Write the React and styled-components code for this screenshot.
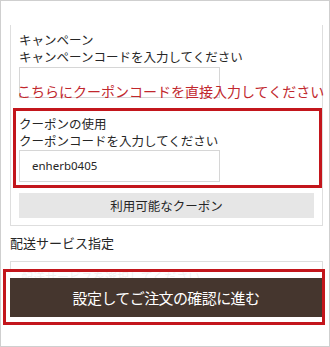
import React from "react";
import styled, { createGlobalStyle } from "styled-components";

const Global = createGlobalStyle`
  html, body { margin: 0; padding: 0; background: #fff; }
  body { font-family: "Noto Sans", "Noto Sans CJK JP", sans-serif; color: #333; }
  * { box-sizing: border-box; }
`;

const Frame = styled.div`
  position: relative;
  width: 330px;
  height: 347px;
  border: 1px solid #cfcfcf;
  padding-top: 24px;
  overflow: hidden;
  background: #fff;
`;

const Card = styled.div`
  width: 313px;
  margin-left: 9px;
  border: 1px solid #dedede;
  border-top: none;
  padding: 6px 8px 7px 8px;
`;

const Label = styled.div`
  font-size: 12.5px;
  line-height: 17px;
  color: #262626;
  font-family: "Noto Sans CJK JP", sans-serif;
  white-space: nowrap;
`;

const Input = styled.div`
  width: 201px;
  height: ${(p) => p.$h || 31}px;
  margin-top: ${(p) => p.$mt || 2}px;
  border: 1px solid #d6d6d6;
  background: #fff;
  display: flex;
  align-items: center;
  padding-left: 12px;
  font-size: 11.5px;
  color: #262626;
  font-family: "Noto Sans", sans-serif;
`;

const Note = styled.div`
  position: absolute;
  left: 16px;
  top: 81px;
  font-size: 14px;
  line-height: 18px;
  color: #c1272d;
  font-family: "Noto Sans CJK JP", sans-serif;
  white-space: nowrap;
`;

const Highlight = styled.div`
  margin: ${(p) => p.$mt || 0}px -8px 0 -6px;
  border: 3px solid #c3161c;
  padding: 3.5px 3px 3px 3px;
`;

const GrayButton = styled.div`
  margin-top: 5px;
  height: 25px;
  background: #e6e6e6;
  display: flex;
  align-items: center;
  justify-content: center;
  font-size: 12.5px;
  color: #262626;
  font-family: "Noto Sans CJK JP", sans-serif;
`;

const SectionTitle = styled.div`
  margin: 8px 0 0 9px;
  font-size: 13px;
  line-height: 18px;
  color: #262626;
  font-family: "Noto Sans CJK JP", sans-serif;
`;

const Select = styled.div`
  width: 313px;
  height: 31px;
  margin: 9px 0 0 9px;
  border: 1px solid #dedede;
  display: flex;
  align-items: center;
  padding-left: 10px;
  font-size: 12px;
  color: #999;
  font-family: "Noto Sans CJK JP", sans-serif;
`;

const Footer = styled.div`
  position: absolute;
  left: 2px;
  top: 268px;
  width: 322px;
  height: 56px;
  border: 3px solid #c3161c;
  background: rgba(255, 255, 255, 0.86);
  padding: 6px 0 5px 4px;
`;

const MainButton = styled.div`
  height: 39px;
  background: #45362e;
  color: #fff;
  display: flex;
  align-items: center;
  justify-content: center;
  font-size: 15px;
  letter-spacing: -0.6px;
  font-family: "Noto Sans CJK JP", sans-serif;
`;

export default function App() {
  return (
    <>
      <Global />
      <Frame>
        <Card>
          <Label>キャンペーン</Label>
          <Label>キャンペーンコードを入力してください</Label>
          <Input />
          <Highlight $mt={10}>
            <Label>クーポンの使用</Label>
            <Label>クーポンコードを入力してください</Label>
            <Input $h={32} $mt={1}>enherb0405</Input>
          </Highlight>
          <GrayButton>利用可能なクーポン</GrayButton>
        </Card>
        <SectionTitle>配送サービス指定</SectionTitle>
        <Select>配送サービスを選択してください</Select>
        <Note>こちらにクーポンコードを直接入力してください</Note>
        <Footer>
          <MainButton>設定してご注文の確認に進む</MainButton>
        </Footer>
      </Frame>
    </>
  );
}
